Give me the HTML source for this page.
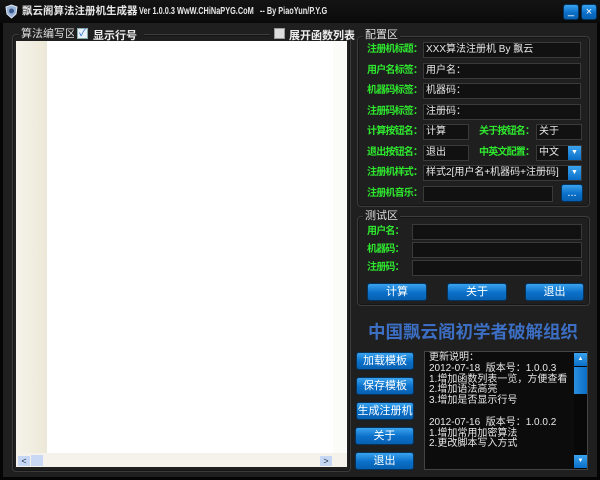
<!DOCTYPE html><html><head><meta charset="utf-8"><style>
*{margin:0;padding:0;box-sizing:border-box}
body{width:600px;height:480px;background:#050505;position:relative;overflow:hidden;font-family:"Liberation Sans","Noto Sans CJK SC",sans-serif;font-size:12px}
.a{position:absolute}
.main{left:3px;top:23px;width:594px;height:454px;background:#1f1f1f}
.grp{position:absolute;border:1px solid #3c3c3c;border-radius:4px;box-shadow:inset 0 0 0 1px #151515}
.lbl{position:absolute;color:#2ee82e;font-weight:bold;font-size:10px;letter-spacing:-0.8px;line-height:14px;white-space:nowrap;margin-top:1px}
.inp{position:absolute;background:#111;border:1px solid #3a3a3a;color:#e8e8e8;font-size:10px;line-height:14px;padding-left:2px;white-space:nowrap;overflow:hidden}
.btn{position:absolute;background:linear-gradient(#3aa3ee,#0a6fc8 55%,#0860b0);border:1px solid #04335e;border-radius:3px;color:#fff;font-size:11px;text-align:center;line-height:16px}
.gt{position:absolute;color:#ddd;background:#1f1f1f;padding:0 2px;font-size:11px;line-height:12px}
.dd{position:absolute;width:13px;height:14px;background:linear-gradient(#3aa3ee,#0a6fc8);color:#fff;font-size:7px;text-align:center;line-height:14px}
</style></head><body>
<div class="a" style="left:0;top:0;width:600px;height:23px;background:linear-gradient(#141414,#0a0a0a)"></div>
<svg class="a" style="left:4px;top:4px" width="15" height="15"><path d="M2 3 L7.5 1 L13 3 L12 10 L7.5 14 L3 10Z" fill="#9ab4d8" stroke="#dfe8f5"/><circle cx="7.5" cy="7" r="2.5" fill="#3a5a90"/></svg>
<div class="a" style="left:22px;top:4px;color:#e8e8e8;font-size:10.5px;font-weight:bold;line-height:14px;white-space:nowrap">飘云阁算法注册机生成器</div>
<div class="a" style="left:139px;top:4px;color:#e8e8e8;font-size:10.5px;font-weight:bold;line-height:14px;white-space:nowrap;transform:scaleX(0.7);transform-origin:left">Ver 1.0.0.3 WwW.CHiNaPYG.CoM &nbsp;&nbsp;-- By PiaoYun/P.Y.G</div>
<div class="btn" style="left:563px;top:4px;width:16px;height:16px;line-height:12px">_</div>
<div class="btn" style="left:581px;top:4px;width:16px;height:16px;line-height:15px">×</div>
<div class="a main"></div>
<div class="grp" style="left:12px;top:34px;width:339px;height:438px"></div>
<div class="gt" style="left:19px;top:28px">算法编写区</div>
<div class="a" style="left:74px;top:28px;background:#1f1f1f;width:70px;height:13px"></div>
<div class="a" style="left:77px;top:28px;width:11px;height:11px;background:#e8f0fa;border:1px solid #8aa;color:#2a6fd0;font-size:10px;line-height:9px;text-align:center">✓</div>
<div class="a" style="left:93px;top:27px;color:#eee;font-weight:bold;font-size:11px">显示行号</div>
<div class="a" style="left:270px;top:28px;background:#1f1f1f;width:80px;height:13px"></div>
<div class="a" style="left:274px;top:28px;width:11px;height:11px;background:#ddd;border:1px solid #999"></div>
<div class="a" style="left:289px;top:27px;color:#eee;font-weight:bold;font-size:11px">展开函数列表</div>
<div class="a" style="left:16px;top:41px;width:331px;height:426px;background:#fff"></div>
<div class="a" style="left:16px;top:41px;width:31px;height:412px;background:linear-gradient(90deg,#f5f3ea,#ece8d8)"></div>
<div class="a" style="left:333px;top:41px;width:13px;height:412px;background:#fbfbf8"></div>
<div class="a" style="left:16px;top:453px;width:331px;height:14px;background:#f4f2ea"></div>
<div class="a" style="left:18px;top:456px;width:12px;height:10px;background:#c5d7f5;font-size:9px;line-height:10px;text-align:center;color:#234">&lt;</div>
<div class="a" style="left:31px;top:455px;width:12px;height:11px;background:#c8d8f5"></div>
<div class="a" style="left:320px;top:456px;width:12px;height:10px;background:#c5d7f5;font-size:9px;line-height:10px;text-align:center;color:#234">&gt;</div>

<div class="grp" style="left:357px;top:36px;width:233px;height:171px"></div>
<div class="gt" style="left:363px;top:29px">配置区</div>
<div class="lbl" style="left:367px;top:42px">注册机标题：</div><div class="inp" style="left:423px;top:42px;width:158px;height:16px">XXX算法注册机 By 飘云</div>
<div class="lbl" style="left:367px;top:63px">用户名标签：</div><div class="inp" style="left:423px;top:63px;width:158px;height:16px">用户名：</div>
<div class="lbl" style="left:367px;top:83px">机器码标签：</div><div class="inp" style="left:423px;top:83px;width:158px;height:16px">机器码：</div>
<div class="lbl" style="left:367px;top:104px">注册码标签：</div><div class="inp" style="left:423px;top:104px;width:158px;height:16px">注册码：</div>
<div class="lbl" style="left:367px;top:124px">计算按钮名：</div><div class="inp" style="left:423px;top:124px;width:46px;height:16px">计算</div>
<div class="lbl" style="left:479px;top:124px">关于按钮名：</div><div class="inp" style="left:536px;top:124px;width:46px;height:16px">关于</div>
<div class="lbl" style="left:367px;top:145px">退出按钮名：</div><div class="inp" style="left:423px;top:145px;width:46px;height:16px">退出</div>
<div class="lbl" style="left:479px;top:145px">中英文配置：</div><div class="inp" style="left:536px;top:145px;width:46px;height:16px">中文</div><div class="dd" style="left:568px;top:146px">▼</div>
<div class="lbl" style="left:367px;top:165px">注册机样式：</div><div class="inp" style="left:423px;top:165px;width:159px;height:16px">样式2[用户名+机器码+注册码]</div><div class="dd" style="left:568px;top:166px">▼</div>
<div class="lbl" style="left:367px;top:186px">注册机音乐：</div><div class="inp" style="left:423px;top:186px;width:130px;height:16px"></div>
<div class="btn" style="left:561px;top:184px;width:22px;height:18px">...</div>

<div class="grp" style="left:357px;top:216px;width:233px;height:90px"></div>
<div class="gt" style="left:363px;top:210px">测试区</div>
<div class="lbl" style="left:367px;top:224px">用户名：</div><div class="inp" style="left:412px;top:224px;width:170px;height:16px"></div>
<div class="lbl" style="left:367px;top:242px">机器码：</div><div class="inp" style="left:412px;top:242px;width:170px;height:16px"></div>
<div class="lbl" style="left:367px;top:260px">注册码：</div><div class="inp" style="left:412px;top:260px;width:170px;height:16px"></div>
<div class="btn" style="left:367px;top:283px;width:60px;height:18px">计算</div>
<div class="btn" style="left:447px;top:283px;width:60px;height:18px">关于</div>
<div class="btn" style="left:525px;top:283px;width:59px;height:18px">退出</div>

<div class="a" style="left:368px;top:321px;color:#3c6fc4;font-size:17.5px;font-weight:bold;white-space:nowrap;line-height:22px">中国飘云阁初学者破解组织</div>

<div class="btn" style="left:356px;top:352px;width:58px;height:18px">加载模板</div>
<div class="btn" style="left:356px;top:377px;width:58px;height:18px">保存模板</div>
<div class="btn" style="left:356px;top:402px;width:58px;height:18px">生成注册机</div>
<div class="btn" style="left:355px;top:427px;width:59px;height:18px">关于</div>
<div class="btn" style="left:355px;top:452px;width:59px;height:18px">退出</div>
<div class="a" style="left:424px;top:351px;width:164px;height:119px;background:#0c0c0c;border:1px solid #444"></div>
<div class="a" style="left:429px;top:353px;color:#e8e8e8;font-size:10px;line-height:10.8px;white-space:pre">更新说明：
2012-07-18  版本号：1.0.0.3
1.增加函数列表一览，方便查看
2.增加语法高亮
3.增加是否显示行号

2012-07-16  版本号：1.0.0.2
1.增加常用加密算法
2.更改脚本写入方式</div>
<div class="a" style="left:574px;top:352px;width:13px;height:117px;background:#080808"></div>
<div class="a" style="left:574px;top:353px;width:13px;height:13px;background:linear-gradient(#3aa3ee,#0a6fc8);color:#fff;font-size:6px;text-align:center;line-height:13px">▲</div>
<div class="a" style="left:574px;top:367px;width:13px;height:27px;background:linear-gradient(90deg,#2a8ee0,#0a6fc8)"></div>
<div class="a" style="left:574px;top:455px;width:13px;height:13px;background:linear-gradient(#3aa3ee,#0a6fc8);color:#fff;font-size:6px;text-align:center;line-height:13px">▼</div>
</body></html>
